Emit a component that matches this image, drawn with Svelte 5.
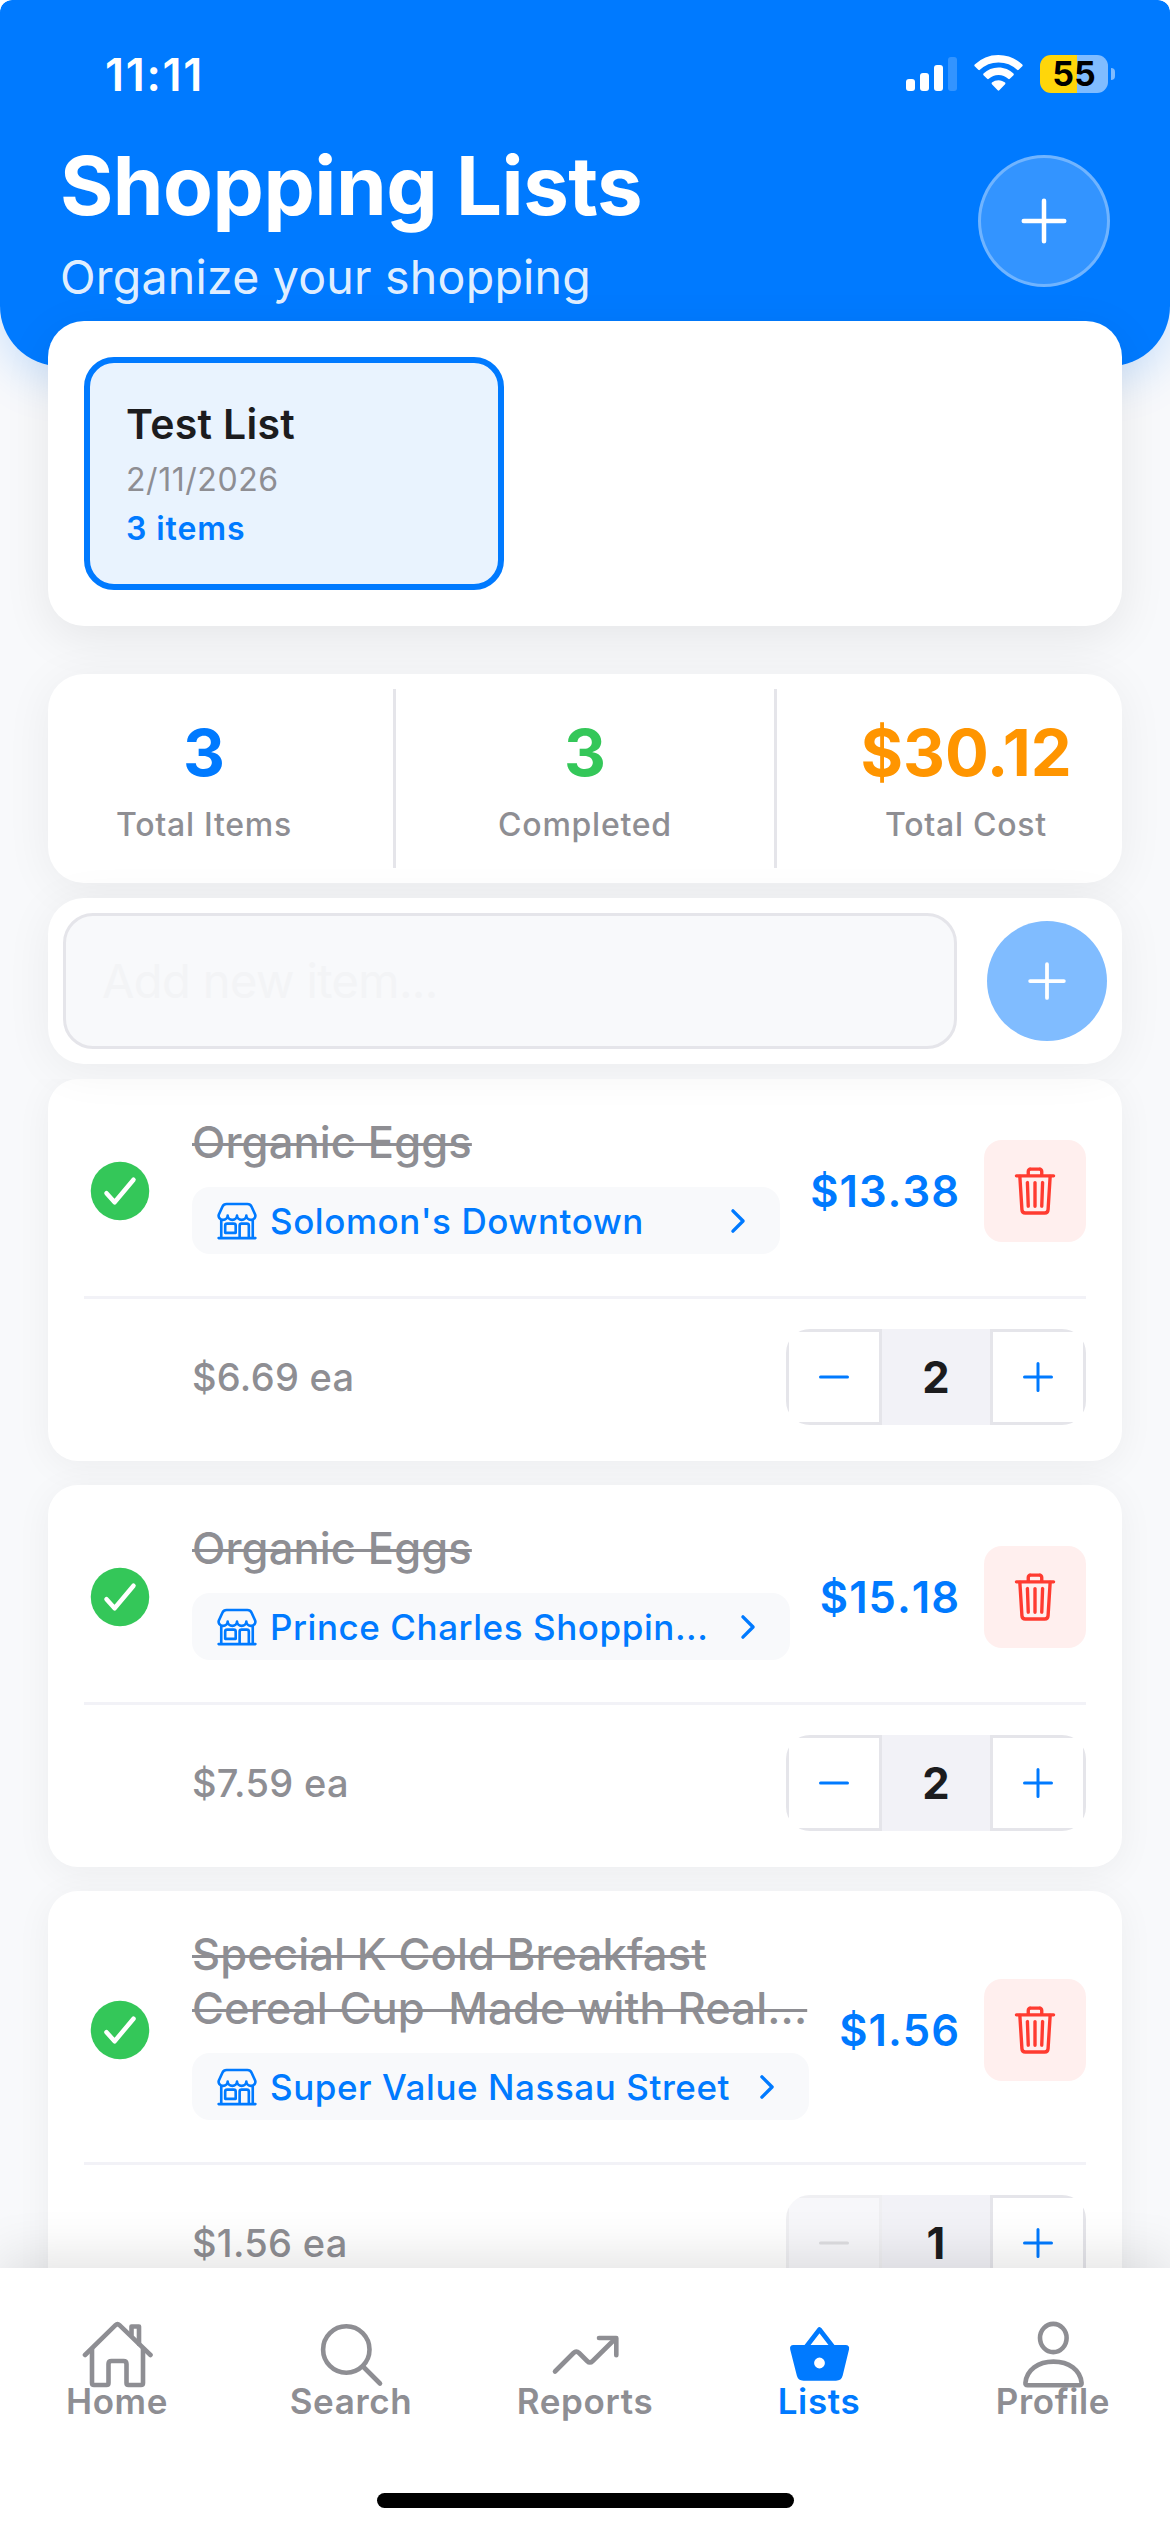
<script lang="ts">
  type Item = {
    name: string;
    store: string;
    price: number;
    qty: number;
    done: boolean;
  };

  let newItem = "";

  let items: Item[] = [
    { name: "Organic Eggs", store: "Solomon's Downtown", price: 6.69, qty: 2, done: true },
    { name: "Organic Eggs", store: "Prince Charles Shoppin...", price: 7.59, qty: 2, done: true },
    {
      name: "Special K Cold Breakfast\nCereal Cup  Made with Real...",
      store: "Super Value Nassau Street",
      price: 1.56,
      qty: 1,
      done: true
    }
  ];

  const tabs = [
    { id: "home", label: "Home" },
    { id: "search", label: "Search" },
    { id: "reports", label: "Reports" },
    { id: "lists", label: "Lists" },
    { id: "profile", label: "Profile" }
  ];

  let activeTab = "lists";

  $: total = items.reduce((sum, item) => sum + item.price * item.qty, 0);
  $: completed = items.filter((item) => item.done).length;

  function money(value: number) {
    return "$" + value.toFixed(2);
  }

  function changeQty(index: number, delta: number) {
    items[index].qty = Math.max(1, items[index].qty + delta);
  }

  function removeItem(index: number) {
    items = items.filter((_, i) => i !== index);
  }
</script>

<div class="screen">
  <header class="header">
    <div class="status">
      <span class="time">11:11</span>
      <div class="status-icons">
        <svg class="signal" viewBox="0 0 51 34">
          <rect x="0" y="22" width="9" height="12" rx="3" />
          <rect x="14" y="16" width="9" height="18" rx="3" />
          <rect x="28" y="8" width="9" height="26" rx="3" />
          <rect x="42" y="0" width="9" height="34" rx="3" opacity="0.2" />
        </svg>
        <svg class="wifi" viewBox="0 0 49 36">
          <path d="M24.5 0C33.7 0 42.2 3.6 48.3 9.6c.5.5.5 1.1 0 1.6l-3.6 3.6c-.5.5-1.1.5-1.6 0A26.6 26.6 0 0 0 24.5 7.4 26.6 26.6 0 0 0 5.9 14.8c-.5.5-1.1.5-1.6 0L.7 11.2c-.5-.5-.5-1.1 0-1.6A34 34 0 0 1 24.5 0z" />
          <path d="M24.5 12.6c5.8 0 11.1 2.3 15 6 .5.5.5 1.1 0 1.6l-3.7 3.6c-.5.5-1.1.5-1.6 0a14 14 0 0 0-19.4 0c-.5.5-1.1.5-1.6 0l-3.7-3.6c-.5-.5-.5-1.1 0-1.6a21.6 21.6 0 0 1 15-6z" />
          <path d="M24.5 25.2c2.5 0 4.8.9 6.6 2.4.5.5.5 1.1 0 1.6l-5.8 6.1c-.5.5-1.1.5-1.6 0l-5.8-6.1c-.5-.5-.5-1.1 0-1.6a10.3 10.3 0 0 1 6.6-2.4z" />
        </svg>
        <div class="battery">
          <span class="battery-body">55</span>
          <span class="battery-cap"></span>
        </div>
      </div>
    </div>

    <div class="header-row">
      <div>
        <h1>Shopping Lists</h1>
        <p class="subtitle">Organize your shopping</p>
      </div>
      <button type="button" class="header-add" aria-label="New list">
        <svg viewBox="0 0 512 512"><path d="M256 112v288M400 256H112" /></svg>
      </button>
    </div>
  </header>

  <section class="lists-card">
    <div class="list-tile">
      <h2>Test List</h2>
      <p class="list-date">2/11/2026</p>
      <p class="list-count">{items.length} items</p>
    </div>
  </section>

  <section class="stats">
    <div class="stat">
      <strong class="blue">{items.length}</strong>
      <span>Total Items</span>
    </div>
    <div class="stat-divider"></div>
    <div class="stat">
      <strong class="green">{completed}</strong>
      <span>Completed</span>
    </div>
    <div class="stat-divider"></div>
    <div class="stat">
      <strong class="orange">{money(total)}</strong>
      <span>Total Cost</span>
    </div>
  </section>

  <section class="add-card">
    <input type="text" placeholder="Add new item..." bind:value={newItem} />
    <button type="button" class="add-button" aria-label="Add item">
      <svg viewBox="0 0 512 512"><path d="M256 112v288M400 256H112" /></svg>
    </button>
  </section>

  <main class="items">
    {#each items as item, i}
      <article class="item">
        <div class="item-main">
          <svg class="check" viewBox="0 0 512 512">
            <circle cx="256" cy="256" r="208" />
            <path d="M352 176L217.6 336 160 272" />
          </svg>

          <div class="item-info">
            <h3 class:done={item.done}>{item.name}</h3>
            <div class="store">
              <svg class="store-icon" viewBox="0 0 512 512">
                <path d="M448 448V240M64 240v208M382.47 48H129.53c-21.79 0-41.47 12-49.93 30.46L36.3 173c-14.58 31.81 9.63 67.85 47.19 69h2c31.4 0 56.85-25.18 56.85-52.23 0 27 25.46 52.23 56.86 52.23S256 218.62 256 189.77c0 27 25.45 52.23 56.85 52.23s56.86-23.38 56.86-52.23c0 28.85 25.45 52.23 56.85 52.23h1.95c37.56-1.17 61.77-37.21 47.19-69l-43.3-94.54C423.94 60 404.26 48 382.47 48zM32 464h448M136 288h80a24 24 0 0 1 24 24v88H112v-88a24 24 0 0 1 24-24zM288 464V312a24 24 0 0 1 24-24h64a24 24 0 0 1 24 24v152" />
              </svg>
              <span class="store-name">{item.store}</span>
              <svg class="chevron" viewBox="0 0 512 512"><path d="M184 112l144 144-144 144" /></svg>
            </div>
          </div>

          <span class="item-total">{money(item.price * item.qty)}</span>

          <button type="button" class="trash" aria-label="Delete" on:click={() => removeItem(i)}>
            <svg viewBox="0 0 512 512">
              <path d="M112 112l20 320c.95 18.49 14.4 32 32 32h184c17.67 0 30.87-13.51 32-32l20-320M80 112h352M192 112V72a23.93 23.93 0 0 1 24-24h80a23.93 23.93 0 0 1 24 24v40M256 176v224M184 176l8 224M328 176l-8 224" />
            </svg>
          </button>
        </div>

        <div class="item-foot">
          <span class="unit-price">{money(item.price)} ea</span>
          <div class="stepper">
            <button
              type="button"
              aria-label="Decrease"
              disabled={item.qty === 1}
              on:click={() => changeQty(i, -1)}
            >
              <svg viewBox="0 0 512 512"><path d="M400 256H112" /></svg>
            </button>
            <span class="qty">{item.qty}</span>
            <button type="button" aria-label="Increase" on:click={() => changeQty(i, 1)}>
              <svg viewBox="0 0 512 512"><path d="M256 112v288M400 256H112" /></svg>
            </button>
          </div>
        </div>
      </article>
    {/each}
  </main>

  <nav class="tabbar">
    <div class="tabs">
      {#each tabs as tab}
        <button
          type="button"
          class="tab"
          class:active={tab.id === activeTab}
          on:click={() => (activeTab = tab.id)}
        >
          <svg viewBox="0 0 72 72">
            {#if tab.id === "home"}
              <path d="M4 37L34.5 7.2q2-1.9 4 0L69.5 37" />
              <path d="M50.5 17V8.5h7.500V26" />
              <path d="M11 31v34q0 2 2 2h12.500q2 0 2-2V46q0-3 3-3h12q3 0 3 3v19q0 2 2 2H60q2 0 2-2V31" />
            {:else if tab.id === "search"}
              <circle cx="31.3" cy="31.5" r="23.2" />
              <path d="M48 48.5L65 65.5" />
            {:else if tab.id === "reports"}
              <path d="M6 53.5L24.5 35q2.800-2.800 5.600 0l8 8q2.800 2.800 5.600 0L66.500 20.500" />
              <path d="M50 20h17.3v17.3" />
            {:else if tab.id === "lists"}
              <path d="M23 29L36.5 11.5 50 29" />
              <path
                class="solid"
                d="M10.5 27h52q4.400 0 3.500 4.500L59.700 57.500q-1.300 5.200-6.700 5.200H20.500q-5.400 0-6.700-5.200L7.200 31.500Q6.300 27 10.500 27zM36.500 39.600a5.400 5.400 0 1 0 0 10.800 5.400 5.400 0 0 0 0-10.800z"
              />
            {:else}
              <ellipse cx="36.3" cy="20" rx="13.3" ry="14.1" />
              <path d="M10.5 67.200h52q2.300 0 2.100-2.300C63.300 52 52 43.600 36.500 43.600S9.700 52 8.400 64.900q-.2 2.300 2.100 2.300z" />
            {/if}
          </svg>
          <span>{tab.label}</span>
        </button>
      {/each}
    </div>
    <div class="home-indicator"></div>
  </nav>
</div>

<style>
  :global(body) {
    margin: 0;
    background: #fff;
  }

  .screen {
    width: 1170px;
    height: 2532px;
    display: flex;
    flex-direction: column;
    overflow: hidden;
    border-radius: 12px 12px 0 0;
    background: #f8f9fb;
    font-family: Inter, "Liberation Sans", sans-serif;
    color: #1c1c1e;
  }

  h1,
  h2,
  h3,
  p {
    margin: 0;
  }

  button {
    border: none;
    padding: 0;
    font: inherit;
    color: inherit;
    box-sizing: border-box;
  }

  svg {
    display: block;
    flex: none;
    fill: none;
    stroke: currentColor;
    stroke-width: 32;
    stroke-linecap: round;
    stroke-linejoin: round;
  }

  .header {
    flex: none;
    height: 366px;
    border-radius: 12px 12px 60px 60px;
    background: #007aff;
    box-shadow: 0 12px 48px rgba(0, 122, 255, 0.2);
    color: #fff;
  }

  .status {
    height: 150px;
    box-sizing: border-box;
    padding: 0 55px 0 105px;
    display: flex;
    align-items: center;
    justify-content: space-between;
  }

  .time {
    margin-bottom: 1px;
    font-size: 45px;
    font-weight: 600;
    letter-spacing: 1.7px;
  }

  .status-icons {
    display: flex;
    align-items: center;
    gap: 17px;
    height: 38px;
    margin-bottom: 2px;
  }

  .status-icons svg {
    fill: #fff;
    stroke: none;
  }

  .signal {
    width: 51px;
    height: 34px;
  }

  .wifi {
    width: 49px;
    height: 36px;
    margin-bottom: 2px;
  }

  .battery {
    display: flex;
    align-items: center;
    gap: 3px;
  }

  .battery-body {
    width: 68px;
    height: 38px;
    border-radius: 11px;
    background: linear-gradient(90deg, #ffd60a 55%, #80bcff 55%);
    color: #000;
    font-size: 34px;
    font-weight: 700;
    line-height: 38px;
    text-align: center;
  }

  .battery-cap {
    width: 4px;
    height: 12px;
    border-radius: 0 4px 4px 0;
    background: #80bcff;
  }

  .header-row {
    display: flex;
    justify-content: space-between;
    align-items: flex-start;
    padding: 0 60px;
  }

  h1 {
    font-size: 81.5px;
    line-height: 71px;
    font-weight: 700;
    letter-spacing: -0.5px;
  }

  .subtitle {
    margin-top: 27px;
    font-size: 46.5px;
    line-height: 58px;
    letter-spacing: 0.22px;
    color: rgba(255, 255, 255, 0.9);
  }

  .header-add {
    width: 132px;
    height: 132px;
    margin-top: 5px;
    border: 3px solid rgba(255, 255, 255, 0.3);
    border-radius: 50%;
    background: rgba(255, 255, 255, 0.2);
    display: grid;
    place-items: center;
    color: #fff;
  }

  .header-add svg {
    width: 72px;
    height: 72px;
  }

  .lists-card,
  .stats,
  .add-card {
    flex: none;
    box-sizing: border-box;
    margin: 0 48px;
    border-radius: 36px;
    background: #fff;
    position: relative;
  }

  .lists-card {
    height: 305px;
    margin-top: -45px;
    padding: 36px;
    box-shadow: 0 12px 48px rgba(0, 0, 0, 0.08);
  }

  .list-tile {
    width: 420px;
    height: 233px;
    box-sizing: border-box;
    padding: 34px 36px 0;
    border: 6px solid #007aff;
    border-radius: 30px;
    background: #e9f3fe;
  }

  h2 {
    font-size: 41px;
    line-height: 54px;
    font-weight: 600;
    letter-spacing: 0.3px;
  }

  .list-date {
    margin-top: 9px;
    font-size: 32px;
    line-height: 40px;
    letter-spacing: 0.55px;
    color: #8e8e93;
  }

  .list-count {
    margin-top: 9px;
    font-size: 32px;
    line-height: 40px;
    font-weight: 600;
    letter-spacing: 0.9px;
    color: #007aff;
  }

  .stats {
    height: 209px;
    margin-top: 48px;
    padding: 15px;
    display: flex;
    box-shadow: 0 6px 48px rgba(0, 0, 0, 0.06);
  }

  .stat {
    flex: 1 1 0;
    min-width: 0;
    padding-top: 24px;
    display: flex;
    flex-direction: column;
    align-items: center;
  }

  .stat strong {
    font-size: 65px;
    line-height: 80px;
    font-weight: 700;
  }

  .stat span {
    margin-top: 11px;
    font-size: 32px;
    line-height: 42px;
    font-weight: 500;
    letter-spacing: 0.75px;
    color: #8e8e93;
  }

  .stat-divider {
    width: 3px;
    margin: 0 48px;
    background: #e5e5ea;
  }

  .blue {
    color: #007aff;
  }

  .green {
    color: #34c759;
  }

  .orange {
    color: #ff9500;
  }

  .add-card {
    height: 166px;
    margin-top: 15px;
    padding: 15px;
    display: flex;
    align-items: center;
    gap: 30px;
    z-index: 1;
    box-shadow: 0 6px 48px rgba(0, 0, 0, 0.06);
  }

  .add-card input {
    flex: 1;
    min-width: 0;
    height: 136px;
    box-sizing: border-box;
    padding: 0 36px 2px;
    border: 3px solid #e5e5ea;
    border-radius: 30px;
    background: #f8f9fb;
    font: inherit;
    font-size: 47px;
    letter-spacing: -0.6px;
    outline: none;
  }

  .add-card input::placeholder {
    color: #f3f4f6;
    opacity: 1;
  }

  .add-button {
    width: 120px;
    height: 120px;
    border-radius: 50%;
    background: #80bcff;
    display: grid;
    place-items: center;
    color: #fff;
  }

  .add-button svg {
    width: 60px;
    height: 60px;
  }

  .items {
    flex: 1;
    min-height: 0;
    margin-top: 15px;
    padding: 0 48px;
    overflow: hidden;
    display: flex;
    flex-direction: column;
    gap: 24px;
  }

  .item {
    flex: none;
    padding: 36px;
    border-radius: 30px;
    background: #fff;
    box-shadow: 0 6px 36px rgba(0, 0, 0, 0.05);
  }

  .item-main {
    display: flex;
    align-items: center;
    padding-bottom: 30px;
    border-bottom: 3px solid #f2f2f7;
  }

  .check {
    width: 72px;
    height: 72px;
    margin-right: 36px;
    stroke: #fff;
  }

  .check circle {
    fill: #34c759;
    stroke: none;
  }

  .item-info {
    flex: 1;
    min-width: 0;
    padding-bottom: 12px;
  }

  h3 {
    font-size: 43.5px;
    line-height: 54px;
    font-weight: 500;
    letter-spacing: 0.12px;
    white-space: pre;
  }

  h3.done {
    color: #8e8e93;
    text-decoration: line-through;
    text-decoration-thickness: 3px;
  }

  .store {
    height: 67px;
    margin-top: 18px;
    box-sizing: border-box;
    padding: 0 24px;
    border-radius: 18px;
    background: #f8f9fb;
    display: flex;
    align-items: center;
    color: #007aff;
  }

  .store-icon {
    width: 42px;
    height: 42px;
    margin-right: 12px;
  }

  .store-name {
    flex: 1;
    min-width: 0;
    font-size: 35px;
    font-weight: 500;
    letter-spacing: 0.56px;
    white-space: nowrap;
  }

  .chevron {
    width: 36px;
    height: 36px;
    stroke-width: 48;
  }

  .item-total {
    margin: 0 24px 0 30px;
    font-size: 43.5px;
    font-weight: 600;
    font-kerning: none;
    letter-spacing: 1px;
    color: #007aff;
  }

  .trash {
    flex: none;
    width: 102px;
    height: 102px;
    border-radius: 18px;
    background: #ffefee;
    display: grid;
    place-items: center;
    color: #ff3b30;
  }

  .trash svg {
    width: 54px;
    height: 54px;
  }

  .item-foot {
    display: flex;
    align-items: center;
    justify-content: space-between;
    padding: 30px 0 0 108px;
  }

  .unit-price {
    font-size: 38px;
    font-weight: 500;
    letter-spacing: 0.3px;
    color: #8e8e93;
  }

  .stepper {
    width: 300px;
    height: 96px;
    display: flex;
    border-radius: 24px;
    overflow: hidden;
  }

  .stepper button {
    width: 96px;
    border: 3px solid #e5e5ea;
    background: #fff;
    display: grid;
    place-items: center;
    color: #007aff;
  }

  .stepper button:disabled {
    background: #f2f2f7;
    color: #c7c7cc;
    opacity: 0.6;
  }

  .stepper svg {
    width: 48px;
    height: 48px;
  }

  .qty {
    flex: 1;
    background: #f2f2f7;
    font-size: 43.5px;
    line-height: 96px;
    font-weight: 700;
    text-align: center;
  }

  .tabbar {
    flex: none;
    position: relative;
    z-index: 2;
    height: 264px;
    box-sizing: border-box;
    padding: 50px 0 24px;
    display: flex;
    flex-direction: column;
    align-items: center;
    justify-content: space-between;
    background: #fff;
    box-shadow: 0 -12px 48px rgba(0, 0, 0, 0.11);
  }

  .tabs {
    width: 100%;
    display: flex;
  }

  .tab {
    flex: 1 1 0;
    display: flex;
    flex-direction: column;
    align-items: center;
    background: none;
    color: #8e8e93;
  }

  .tab.active {
    color: #007aff;
  }

  .tab svg {
    width: 72px;
    height: 72px;
    stroke-width: 4.6;
  }

  .tab .solid {
    fill: currentColor;
    fill-rule: evenodd;
    stroke: none;
  }

  .tab span {
    margin-top: -7px;
    font-size: 35px;
    line-height: 36px;
    font-weight: 600;
    letter-spacing: 0.65px;
  }

  .home-indicator {
    width: 417px;
    height: 15px;
    border-radius: 8px;
    background: #000;
  }
</style>
